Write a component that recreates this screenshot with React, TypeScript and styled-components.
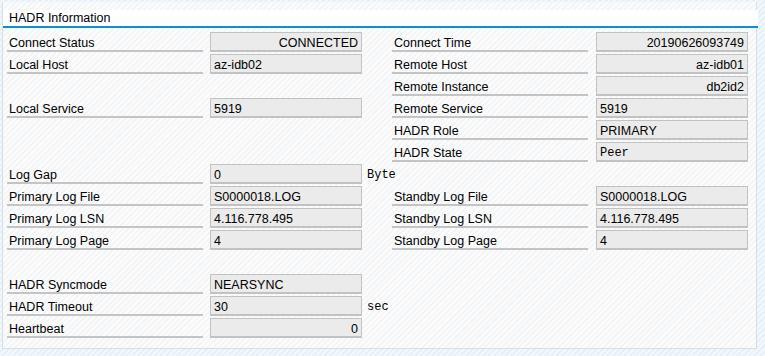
import React from 'react';
import styled, { createGlobalStyle } from 'styled-components';

const GlobalStyle = createGlobalStyle`
  html, body {
    margin: 0;
    padding: 0;
  }
  body {
    width: 765px;
    height: 356px;
    overflow: hidden;
    font-family: 'Liberation Sans', Arial, sans-serif;
    font-size: 12.5px;
    color: #000;
    background: repeating-linear-gradient(
      135deg,
      #e6f0f8 0px,
      #e6f0f8 2px,
      #f3f8fc 2px,
      #f3f8fc 4px
    );
  }
`;

type Align = 'left' | 'right';

interface FieldDef {
  label: string;
  value: string;
  align?: Align;
  mono?: boolean;
}

interface RowDef {
  left?: FieldDef;
  unit?: string;
  right?: FieldDef;
}

const rows: RowDef[] = [
  {
    left: { label: 'Connect Status', value: 'CONNECTED', align: 'right' },
    right: { label: 'Connect Time', value: '20190626093749', align: 'right' },
  },
  {
    left: { label: 'Local Host', value: 'az-idb02' },
    right: { label: 'Remote Host', value: 'az-idb01', align: 'right' },
  },
  {
    right: { label: 'Remote Instance', value: 'db2id2', align: 'right' },
  },
  {
    left: { label: 'Local Service', value: '5919' },
    right: { label: 'Remote Service', value: '5919' },
  },
  {
    right: { label: 'HADR Role', value: 'PRIMARY' },
  },
  {
    right: { label: 'HADR State', value: 'Peer', mono: true },
  },
  {
    left: { label: 'Log Gap', value: '0' },
    unit: 'Byte',
  },
  {
    left: { label: 'Primary Log File', value: 'S0000018.LOG' },
    right: { label: 'Standby Log File', value: 'S0000018.LOG' },
  },
  {
    left: { label: 'Primary Log LSN', value: '4.116.778.495' },
    right: { label: 'Standby Log LSN', value: '4.116.778.495' },
  },
  {
    left: { label: 'Primary Log Page', value: '4' },
    right: { label: 'Standby Log Page', value: '4' },
  },
  {},
  {
    left: { label: 'HADR Syncmode', value: 'NEARSYNC' },
  },
  {
    left: { label: 'HADR Timeout', value: '30' },
    unit: 'sec',
  },
  {
    left: { label: 'Heartbeat', value: '0', align: 'right' },
  },
];

const Frame = styled.div`
  padding: 2px 0 0 2px;
`;

const Panel = styled.section`
  width: 755px;
  height: 347px;
  box-sizing: border-box;
  border: 1px solid #d6dee6;
  border-top: none;
  background: repeating-linear-gradient(
    135deg,
    #f3f5f7 0px,
    #f3f5f7 2px,
    #fcfcfd 2px,
    #fcfcfd 4px
  );
  display: flex;
  flex-direction: column;
`;

const TitleBar = styled.header`
  margin-top: 8px;
  height: 16px;
  padding-left: 6px;
  background: #fff;
  border-bottom: 2px solid #0a8fd8;
  margin-right: -2px;
  line-height: 17px;
  font-size: 12.5px;
`;

const Grid = styled.div`
  display: flex;
  flex-direction: column;
  gap: 2px;
  padding: 4px 0 0 4px;
`;

const Row = styled.div`
  display: grid;
  grid-template-columns: 196px 7px 152px 30px 196px 8px 152px;
  height: 20px;
`;

const Label = styled.div`
  box-sizing: border-box;
  height: 20px;
  padding: 4px 0 0 2px;
  border-bottom: 2px solid #c4c4c4;
  white-space: nowrap;
`;

const Field = styled.div<{ $align: Align; $mono: boolean }>`
  box-sizing: border-box;
  height: 20px;
  padding: 3px 3px 0 3px;
  background: #ebebeb;
  border: 1px solid #c2c2c2;
  border-bottom-width: 2px;
  text-align: ${(p) => p.$align};
  font-family: ${(p) =>
    p.$mono ? "'Liberation Mono', 'Courier New', monospace" : "'Liberation Sans', Arial, sans-serif"};
  font-size: ${(p) => (p.$mono ? '12px' : '12.5px')};
  white-space: nowrap;
  overflow: hidden;
`;

const Unit = styled.div`
  padding: 4px 0 0 5px;
  font-family: 'Liberation Mono', 'Courier New', monospace;
  font-size: 12px;
  white-space: nowrap;
`;

const Empty = styled.div``;

function renderPair(f?: FieldDef) {
  if (!f) {
    return [<Empty key="l" />, <Empty key="g" />, <Empty key="v" />];
  }
  return [
    <Label key="l">{f.label}</Label>,
    <Empty key="g" />,
    <Field key="v" $align={f.align ?? 'left'} $mono={!!f.mono}>
      {f.value}
    </Field>,
  ];
}

export default function App() {
  return (
    <>
      <GlobalStyle />
      <Frame>
        <Panel>
          <TitleBar>HADR Information</TitleBar>
          <Grid>
            {rows.map((r, i) => (
              <Row key={i}>
                {renderPair(r.left)}
                <Unit>{r.unit}</Unit>
                {renderPair(r.right)}
              </Row>
            ))}
          </Grid>
        </Panel>
      </Frame>
    </>
  );
}
